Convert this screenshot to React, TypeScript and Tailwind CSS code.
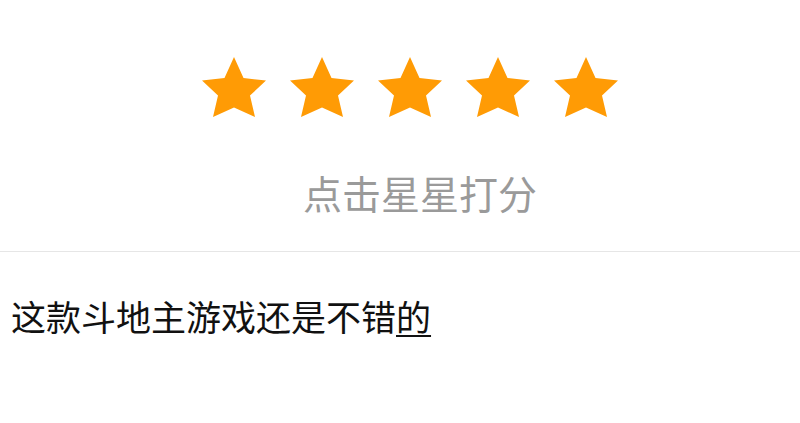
const starPoints = '32,0 41.5,21 64,23.5 48,38.5 53,60 32,50.5 11,60 16,38.5 0,23.5 22.5,21';

function Star() {
  return (
    <svg width="64" height="60" viewBox="0 0 64 60" className="block">
      <polygon points={starPoints} fill="#ff9b05" />
    </svg>
  );
}

export default function App() {
  return (
    <main
      className="min-h-screen bg-white"
      style={{ fontFamily: '"Noto Sans CJK SC", "Noto Sans", sans-serif' }}
    >
      <section className="flex h-[251px] flex-col items-center">
        <div className="mt-[57px] flex gap-[24px] pl-[20px]">
          {[0, 1, 2, 3, 4].map((i) => (
            <Star key={i} />
          ))}
        </div>
        <p className="mt-[56px] pl-[40px] text-[39px] leading-none text-[#9a9a9a]">点击星星打分</p>
      </section>
      <div className="h-px bg-[#e6e6e6]" />
      <p className="mt-[46px] pl-[11px] text-[35px] leading-none text-[#111]">
        这款斗地主游戏还是不错<span className="underline decoration-2 underline-offset-4">的</span>
      </p>
    </main>
  );
}
